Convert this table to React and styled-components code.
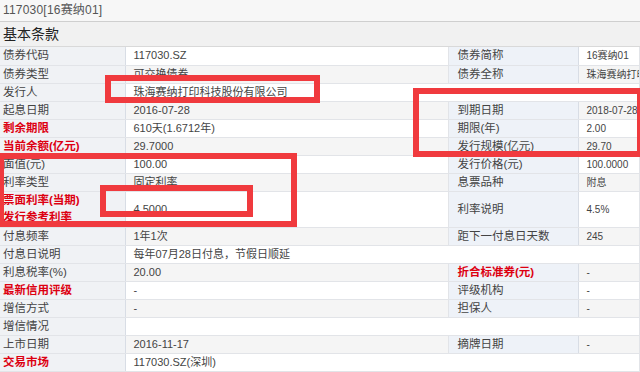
import React from 'react'
import styled, { createGlobalStyle } from 'styled-components'

const GlobalStyle = createGlobalStyle`
  html, body {
    margin: 0;
    padding: 0;
    background: #fff;
  }
  body {
    font-family: "Liberation Sans", "Noto Sans CJK SC", sans-serif;
    font-size: 11px;
    color: #333;
  }
`

const rows = [
  { label: '债券代码', value: '117030.SZ', label2: '债券简称', value2: '16赛纳01' },
  { label: '债券类型', value: '可交换债券', label2: '债券全称', value2: '珠海赛纳打印科技股份有限公司' },
  { label: '发行人', value: '珠海赛纳打印科技股份有限公司', wide: true },
  { label: '起息日期', value: '2016-07-28', label2: '到期日期', value2: '2018-07-28' },
  { label: '剩余期限', red: true, value: '610天(1.6712年)', label2: '期限(年)', value2: '2.00' },
  { label: '当前余额(亿元)', red: true, value: '29.7000', label2: '发行规模(亿元)', value2: '29.70' },
  { label: '面值(元)', value: '100.00', label2: '发行价格(元)', value2: '100.0000' },
  { label: '利率类型', value: '固定利率', label2: '息票品种', value2: '附息' },
  { label: ['票面利率(当期)', '发行参考利率'], red: true, tall: true, value: '4.5000', label2: '利率说明', value2: '4.5%' },
  { label: '付息频率', value: '1年1次', label2: '距下一付息日天数', value2: '245' },
  { label: '付息日说明', value: '每年07月28日付息，节假日顺延', wide: true },
  { label: '利息税率(%)', value: '20.00', label2: '折合标准券(元)', red2: true, value2: '-' },
  { label: '最新信用评级', red: true, value: '-', label2: '评级机构', value2: '-' },
  { label: '增信方式', value: '-', label2: '担保人', value2: '-' },
  { label: '增信情况', value: '', wide: true },
  { label: '上市日期', value: '2016-11-17', label2: '摘牌日期', value2: '-' },
  { label: '交易市场', red: true, value: '117030.SZ(深圳)', wide: true },
]

// red annotation frames drawn over the table
const marks = [
  { left: 105, top: 75, width: 215, height: 28 },
  { left: 413, top: 88, width: 230, height: 69 },
  { left: -2, top: 153, width: 299, height: 74 },
  { left: 100, top: 185, width: 153, height: 32 },
]

const App = () => {
  return (
    <Page>
      <GlobalStyle />
      <TitleBar>117030[16赛纳01]</TitleBar>
      <SectionHead>基本条款</SectionHead>
      <Table>
        <colgroup>
          <col style={{ width: 125 }} />
          <col style={{ width: 323 }} />
          <col style={{ width: 130 }} />
          <col />
        </colgroup>
        <tbody>
          {rows.map((r, i) => (
            <Row key={i} $alt={i % 2 === 1} $tall={r.tall}>
              <Label $red={r.red}>
                {Array.isArray(r.label)
                  ? r.label.map((l) => <LabelLine key={l}>{l}</LabelLine>)
                  : r.label}
              </Label>
              {r.wide ? (
                <Value colSpan={3}>{r.value}</Value>
              ) : (
                <>
                  <Value>{r.value}</Value>
                  <Label $right $red={r.red2}>{r.label2}</Label>
                  <Value $right>{r.value2}</Value>
                </>
              )}
            </Row>
          ))}
        </tbody>
      </Table>
      {marks.map((m, i) => (
        <Mark key={i} style={{ left: m.left, top: m.top, width: m.width, height: m.height }} />
      ))}
    </Page>
  )
}

const Page = styled.div`
  position: relative;
  width: 640px;
  height: 372px;
  overflow: hidden;
  background: #fff;
`

const TitleBar = styled.div`
  height: 21px;
  line-height: 21px;
  padding-left: 3px;
  background: #f7f7f7;
  border-bottom: 1px solid #cfcfcf;
  color: #555;
  font-size: 12px;
  letter-spacing: 0.2px;
`

const SectionHead = styled.div`
  height: 24px;
  line-height: 24px;
  padding-left: 3px;
  background: #f1f1f1;
  border-bottom: 1px solid #d9d9d9;
  color: #222;
  font-size: 14px;
`

const Table = styled.table`
  width: 640px;
  border-collapse: collapse;
  table-layout: fixed;
`

const Row = styled.tr`
  height: ${(p) => (p.$tall ? '36px' : '18px')};
  background: ${(p) => (p.$alt ? '#f5f5f5' : '#fff')};
`

const Label = styled.td`
  padding: 0 0 0 ${(p) => (p.$right ? '9px' : '3px')};
  border-bottom: 1px solid #e2e4e8;
  border-right: 1px solid #d8dde5;
  background: ${(p) => (p.$right ? '#eef2f8' : '#f0f2f5')};
  color: ${(p) => (p.$red ? '#dd0011' : '#444')};
  font-weight: ${(p) => (p.$red ? 'bold' : 'normal')};
  font-size: 11.5px;
  white-space: nowrap;
  overflow: hidden;
  line-height: 17px;
`

const LabelLine = styled.div`
  height: 17px;
  line-height: 17px;
`

const Value = styled.td`
  padding: 0 0 0 ${(p) => (p.$right ? '8px' : '8px')};
  border-bottom: 1px solid #e2e4e8;
  border-right: 1px solid #e2e4e8;
  color: #444;
  font-size: ${(p) => (p.$right ? '10px' : '11px')};
  white-space: nowrap;
  overflow: hidden;
  line-height: 17px;
`

const Mark = styled.div`
  position: absolute;
  box-sizing: border-box;
  border: 6px solid #f03a3e;
  pointer-events: none;
`

export default App
